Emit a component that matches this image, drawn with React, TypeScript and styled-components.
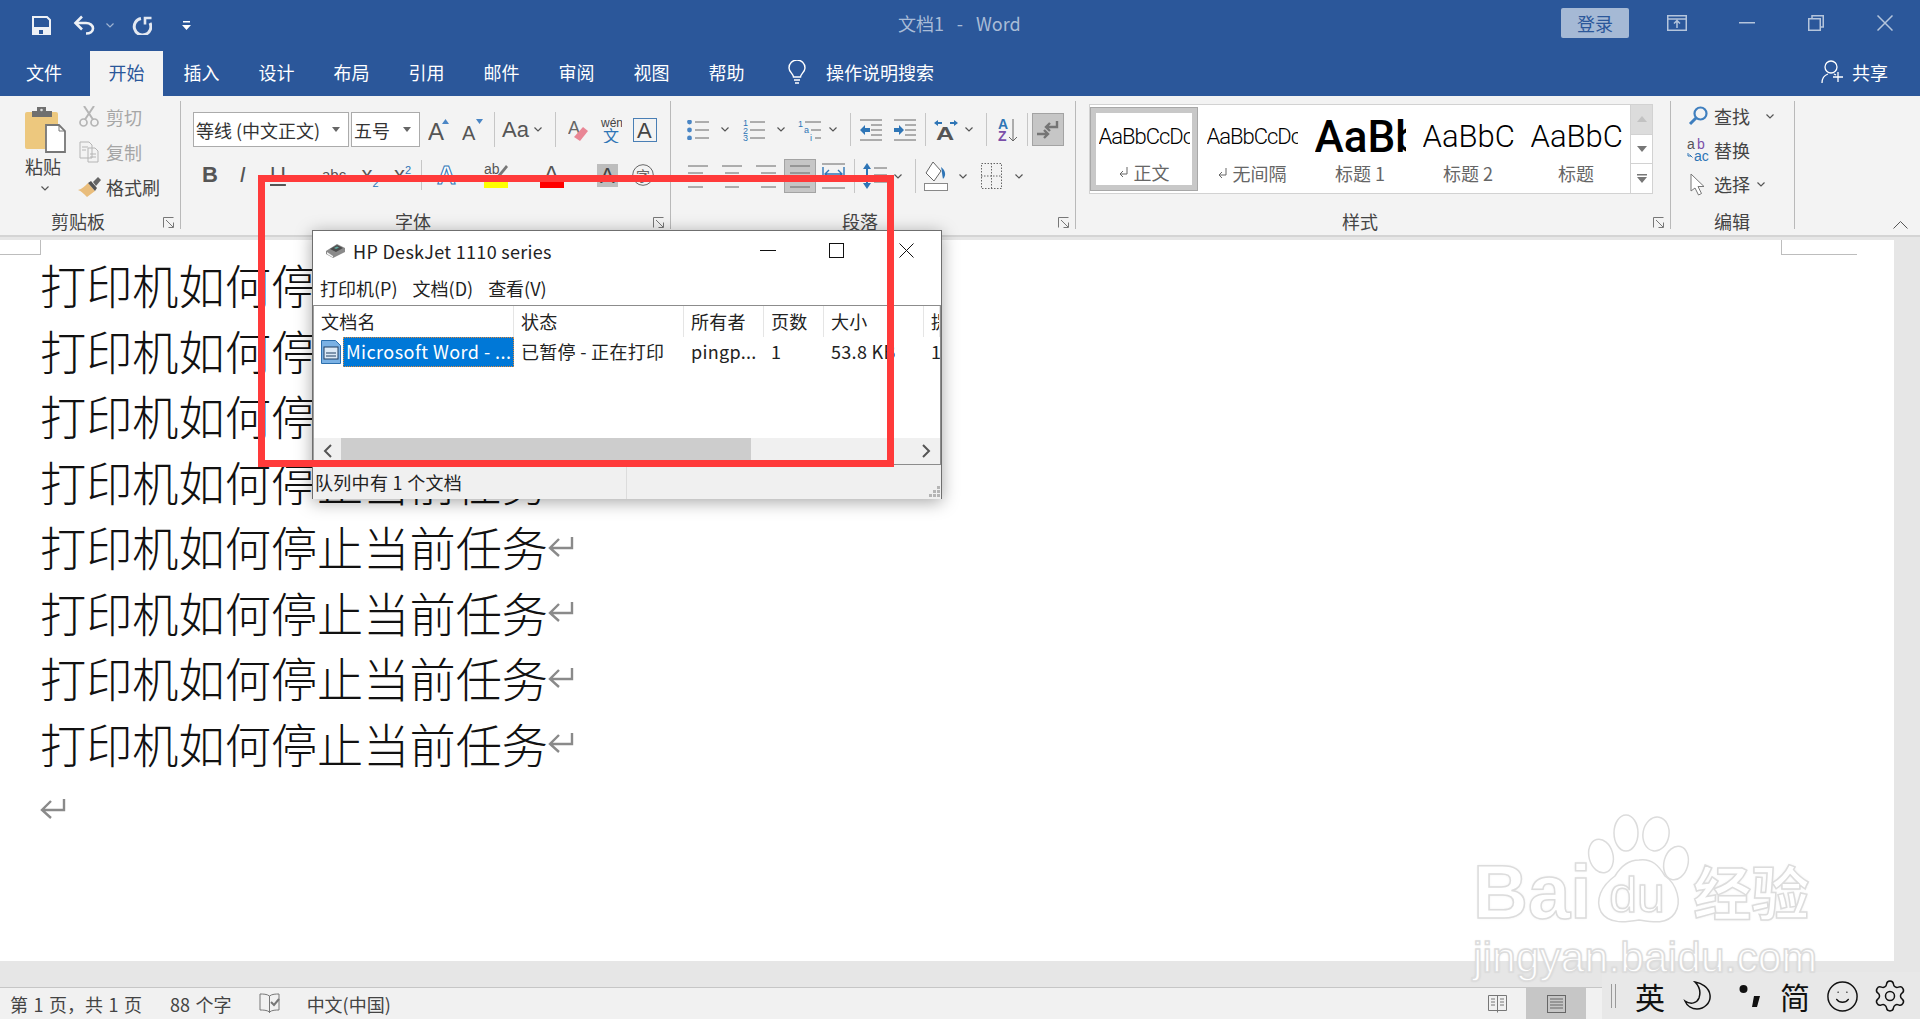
import { FC, ReactNode } from "react";
import styled, { createGlobalStyle } from "styled-components";
import { Settings, Smile } from "lucide-react";

const CJK = `"Noto Sans CJK SC", "Noto Sans", sans-serif`;
const LATIN = `"Liberation Sans", "Noto Sans CJK SC", sans-serif`;

const GlobalStyle = createGlobalStyle`
  html, body { margin: 0; padding: 0; height: 100%; overflow: hidden; background: #fff; }
  #root { width: 1920px; height: 1019px; }
  * { box-sizing: border-box; }
`;

const Shell = styled.div`
  position: relative;
  width: 1920px;
  height: 1019px;
  display: flex;
  flex-direction: column;
  overflow: hidden;
  font-family: ${CJK};
  font-size: 18px;
  color: #444;
`;

/* ---------- title bar ---------- */
const TitleBar = styled.div`
  height: 51px;
  background: #2b579a;
  display: flex;
  align-items: flex-start;
  padding: 15px 0 0 32px;
`;
const Qat = styled.span<{ $w: number; $ml?: number }>`
  display: inline-flex;
  width: ${(p) => p.$w}px;
  margin-left: ${(p) => p.$ml ?? 0}px;
  height: 20px;
  align-items: center;
  justify-content: center;
`;
const DocTitle = styled.div`
  position: absolute;
  left: 898px;
  top: 9px;
  color: #a9bcd7;
  font-size: 18px;
  line-height: 28px;
  white-space: pre;
  word-spacing: 2.4px;
`;
const WindowControls = styled.div`
  margin-left: auto;
  display: flex;
  align-items: center;
  height: 30px;
  margin-top: -7px;
  padding-right: 27px;
`;
const LoginButton = styled.div`
  width: 68px;
  height: 30px;
  background: #a5b9d5;
  color: #2b579a;
  border-radius: 2px;
  text-align: center;
  line-height: 30px;
  font-size: 18px;
`;
const WinIcon = styled.span<{ $ml: number; $w: number }>`
  display: inline-flex;
  margin-left: ${(p) => p.$ml}px;
  width: ${(p) => p.$w}px;
  justify-content: center;
`;

/* ---------- tab row ---------- */
const TabRow = styled.div`
  height: 45px;
  background: #2b579a;
  display: flex;
  padding-left: 8px;
  color: #fff;
`;
const Tab = styled.div<{ $active?: boolean; $w?: number; $mr?: number }>`
  width: ${(p) => p.$w ?? 75}px;
  margin-right: ${(p) => p.$mr ?? 0}px;
  text-align: center;
  line-height: 42px;
  position: relative;
  color: ${(p) => (p.$active ? "#2b579a" : "#fff")};
  z-index: 0;
  &::before {
    content: "";
    display: ${(p) => (p.$active ? "block" : "none")};
    position: absolute;
    inset: 0 1px;
    background: #f3f3f3;
    z-index: -1;
  }
`;
const TellMe = styled.div`
  display: flex;
  align-items: center;
  margin-left: 24px;
  gap: 20px;
  height: 42px;
`;
const ShareBox = styled.div`
  margin-left: auto;
  display: flex;
  align-items: center;
  gap: 8px;
  padding-right: 32px;
  height: 42px;
`;

/* ---------- ribbon ---------- */
const Ribbon = styled.div`
  height: 139px;
  background: #f3f3f3;
  display: flex;
`;
const Group = styled.div<{ $w: number }>`
  width: ${(p) => p.$w}px;
  height: 128px;
  margin-top: 5px;
  border-right: 1px solid #b9b9b9;
  display: flex;
  flex-direction: column;
  flex-shrink: 0;
`;
const GroupBody = styled.div`
  height: 107px;
  flex-shrink: 0;
`;
const GroupLabel = styled.div<{ $left: number }>`
  height: 26px;
  flex-shrink: 0;
  display: flex;
  align-items: center;
  line-height: 26px;
  padding: 0 5px 0 ${(p) => p.$left}px;
  color: #444;
`;
const LauncherSpot = styled.span`
  margin-left: auto;
  display: inline-flex;
  margin-top: 3px;
`;
const Row = styled.div<{ $mt: number; $h: number; $pl?: number }>`
  display: flex;
  align-items: center;
  margin-top: ${(p) => p.$mt}px;
  height: ${(p) => p.$h}px;
  padding-left: ${(p) => p.$pl ?? 0}px;
`;
const Tool = styled.span<{ $w: number; $ml?: number }>`
  display: inline-flex;
  flex-shrink: 0;
  width: ${(p) => p.$w}px;
  margin-left: ${(p) => p.$ml ?? 0}px;
  justify-content: center;
  align-items: center;
`;
const ActiveTool = styled(Tool)<{ $h: number }>`
  height: ${(p) => p.$h}px;
  background: #c6c6c6;
  border: 1px solid #a3a3a3;
`;
const ToolSep = styled.span<{ $ml: number }>`
  width: 1px;
  flex-shrink: 0;
  height: 100%;
  margin-left: ${(p) => p.$ml}px;
  background: #c6c6c6;
`;
const Letter = styled.span<{ $w: number; $ml: number; $size?: number; $bold?: boolean; $italic?: boolean; $under?: boolean }>`
  display: inline-block;
  flex-shrink: 0;
  width: ${(p) => p.$w}px;
  margin-left: ${(p) => p.$ml}px;
  text-align: center;
  white-space: nowrap;
  font-family: ${LATIN};
  font-size: ${(p) => p.$size ?? 22}px;
  font-weight: ${(p) => (p.$bold ? 700 : 400)};
  font-style: ${(p) => (p.$italic ? "italic" : "normal")};
  text-decoration: ${(p) => (p.$under ? "underline" : "none")};
  color: #555;
  line-height: 30px;
  sub, sup {
    font-size: 11px;
    line-height: 0;
    color: #2e75b6;
  }
`;

/* clipboard */
const ClipBody = styled(GroupBody)`
  display: flex;
`;
const PasteCol = styled.div`
  width: 78px;
  padding: 6px 0 0 25px;
  display: flex;
  flex-direction: column;
  align-items: flex-start;
`;
const PasteLabel = styled.div`
  width: 36px;
  line-height: 26px;
  margin-top: -1px;
  text-align: center;
`;
const PasteChevron = styled.div`
  width: 40px;
  display: flex;
  justify-content: center;
  margin-top: 7px;
`;
const ClipCol = styled.div`
  display: flex;
  flex-direction: column;
  margin-top: -2px;
`;
const ClipItem = styled.div<{ $off?: boolean }>`
  height: 35px;
  display: flex;
  align-items: center;
  gap: 6px;
  color: ${(p) => (p.$off ? "#a6a6a6" : "#444")};
`;
const ClipIcon = styled.span`
  display: inline-flex;
  width: 22px;
  justify-content: center;
`;

/* font boxes */
const SelectBox = styled.div<{ $w: number; $ml?: number }>`
  width: ${(p) => p.$w}px;
  margin-left: ${(p) => p.$ml ?? 0}px;
  height: 35px;
  background: #fff;
  border: 1px solid #ababab;
  display: flex;
  align-items: center;
  justify-content: space-between;
  padding: 0 8px 0 2px;
  color: #333;
  white-space: nowrap;
  flex-shrink: 0;
`;

/* styles gallery */
const StylesBody = styled(GroupBody)`
  display: flex;
  padding: 3px 0 0 13px;
`;
const Gallery = styled.div`
  width: 542px;
  height: 90px;
  background: #fff;
  border: 1px solid #d2d2d2;
  display: flex;
  padding: 0;
`;
const StyleItem = styled.div<{ $selected?: boolean }>`
  width: 108px;
  height: ${(p) => (p.$selected ? "84px" : "88px")};
  margin-top: ${(p) => (p.$selected ? "2px" : "0")};
  flex-shrink: 0;
  border: ${(p) => (p.$selected ? "6px solid #c8c8c8" : "6px solid transparent")};
  outline: ${(p) => (p.$selected ? "1px solid #a8a8a8" : "none")};
  outline-offset: -1px;
  display: flex;
  flex-direction: column;
  align-items: center;
  color: #666;
`;
const Preview = styled.div<{ $size: number; $weight?: number; $mt?: number; $track?: number }>`
  width: 91px;
  height: 47px;
  overflow: hidden;
  white-space: nowrap;
  color: #000;
  font-family: Roboto, ${LATIN};
  font-size: ${(p) => p.$size}px;
  font-weight: ${(p) => p.$weight ?? 300};
  letter-spacing: ${(p) => p.$track ?? 0}px;
  line-height: 48px;
  margin-top: ${(p) => p.$mt ?? 0}px;
`;
const StyleName = styled.div`
  line-height: 26px;
  font-size: 18px;
  display: flex;
  align-items: center;
  gap: 5px;
`;
const GalleryScroll = styled.div`
  width: 22px;
  height: 90px;
  display: flex;
  flex-direction: column;
  border: 1px solid #d2d2d2;
  border-left: none;
`;
const ScrollCell = styled.div<{ $top?: boolean }>`
  flex: 1;
  display: flex;
  align-items: center;
  justify-content: center;
  background: ${(p) => (p.$top ? "#dcdcdc" : "#fff")};
  border-bottom: 1px solid #d2d2d2;
  &:last-child { border-bottom: none; }
`;

/* editing */
const EditBody = styled(GroupBody)`
  height: 109px;
  margin-top: -2px;
`;
const EditRow = styled.div`
  height: 34px;
  display: flex;
  align-items: center;
  padding-left: 16px;
`;
const EditIcon = styled.span`
  display: inline-flex;
  width: 22px;
  justify-content: center;
  margin-right: 5px;
`;
const EditChevron = styled.span<{ $ml: number }>`
  display: inline-flex;
  margin-left: ${(p) => p.$ml}px;
`;
const CollapseSpot = styled.div`
  flex: 1;
  display: flex;
  justify-content: flex-end;
  align-items: flex-end;
  padding: 0 12px 6px 0;
`;

/* ---------- document ---------- */
const Workspace = styled.div`
  flex: 1;
  display: flex;
  flex-direction: column;
  background: #e6e6e6;
  border-top: 2px solid #d4d4d4;
  padding-top: 3px;
`;
const DocRow = styled.div`
  flex: 1;
  display: flex;
`;
const Page = styled.div`
  flex: 1;
  position: relative;
  background: #fff;
  padding: 11px 0 0 40px;
  &::before {
    content: "";
    position: absolute;
    left: 0;
    top: 0;
    width: 40px;
    height: 14px;
    border-right: 1px solid #bdbdbd;
    border-bottom: 1px solid #bdbdbd;
  }
  &::after {
    content: "";
    position: absolute;
    left: 1781px;
    top: 0;
    width: 75px;
    height: 14px;
    border-left: 1px solid #bdbdbd;
    border-bottom: 1px solid #bdbdbd;
  }
`;
const Gutter = styled.div`
  width: 26px;
`;
const BottomBand = styled.div`
  height: 26px;
`;
const DocLine = styled.div`
  height: 65.5px;
  display: flex;
  align-items: center;
  font-size: 46.2px;
  line-height: 65.5px;
  color: #111;
  font-weight: 300;
  white-space: nowrap;
`;
const ReturnMark = styled.span`
  display: inline-flex;
`;

/* ---------- status bar ---------- */
const StatusBar = styled.div`
  height: 32px;
  background: #f1f1f1;
  border-top: 1px solid #c6c6c6;
  display: flex;
  align-items: center;
  padding-left: 10px;
  color: #444;
  word-spacing: 1.5px;
`;
const StatusItem = styled.span<{ $ml?: number }>`
  margin-left: ${(p) => p.$ml ?? 0}px;
  display: inline-flex;
  white-space: pre;
`;
const ViewSpacer = styled.span`
  flex: 1;
`;
const ViewButton = styled.span<{ $active?: boolean; $ml?: number }>`
  width: ${(p) => (p.$active ? 60 : 20)}px;
  height: 31px;
  margin-left: ${(p) => p.$ml ?? 0}px;
  background: ${(p) => (p.$active ? "#c6c6c6" : "transparent")};
  display: inline-flex;
  align-items: center;
  justify-content: center;
`;
const ViewTail = styled.span`
  width: 334px;
`;

/* ---------- floating IME bar ---------- */
const ImeBar = styled.div`
  position: absolute;
  right: 0;
  bottom: 0;
  width: 318px;
  height: 47px;
  background: #e8e8e8;
  display: flex;
  align-items: flex-start;
  padding: 9px 0 0 9px;
  color: #111;
`;
const ImeDivider = styled.span`
  width: 5px;
  height: 24px;
  margin-top: 3px;
  border-left: 1px solid #9a9a9a;
  border-right: 1px solid #9a9a9a;
`;
const ImeGlyph = styled.span<{ $ml: number }>`
  margin-left: ${(p) => p.$ml}px;
  width: 30px;
  height: 30px;
  flex-shrink: 0;
  display: inline-flex;
  align-items: center;
  justify-content: center;
  font-size: 30px;
  line-height: 30px;
  color: #111;
  svg { flex-shrink: 0; }
`;

/* ---------- printer queue window ---------- */
const PrintWindow = styled.div`
  position: absolute;
  left: 312px;
  top: 230px;
  width: 630px;
  height: 269px;
  background: #fff;
  border: 1px solid #6f6f6f;
  box-shadow: 0 3px 16px rgba(0, 0, 0, 0.35);
  display: flex;
  flex-direction: column;
  color: #222;
  letter-spacing: 0.3px;
  z-index: 2;
`;
const WindowTitle = styled.div`
  height: 39px;
  display: flex;
  align-items: center;
  padding-left: 12px;
  gap: 7px;
  flex-shrink: 0;
`;
const WindowButtons = styled.div`
  margin-left: auto;
  display: flex;
  align-items: center;
  padding-right: 27px;
`;
const WindowButton = styled.span<{ $ml: number }>`
  display: inline-flex;
  margin-left: ${(p) => p.$ml}px;
`;
const MenuRow = styled.div`
  height: 35px;
  display: flex;
  align-items: center;
  padding-left: 7px;
  gap: 15px;
  flex-shrink: 0;
  letter-spacing: 0;
`;
const ListBox = styled.div`
  height: 160px;
  border: 1px solid #8c8c8c;
  border-left-color: #a0a0a0;
  margin: 0;
  display: flex;
  flex-direction: column;
  flex-shrink: 0;
`;
const Columns = styled.div`
  display: grid;
  grid-template-columns: 200px 170px 80px 60px 100px 1fr;
  overflow: hidden;
`;
const HeadCell = styled.div`
  height: 31px;
  line-height: 31px;
  padding-left: 7px;
  border-right: 1px solid #e5e5e5;
  white-space: nowrap;
  overflow: hidden;
  &:last-child { border-right: none; }
`;
const BodyCell = styled.div`
  height: 30px;
  line-height: 28px;
  padding-left: 7px;
  white-space: nowrap;
  overflow: hidden;
`;
const FirstCell = styled.div`
  height: 30px;
  display: flex;
  align-items: center;
  padding-left: 7px;
`;
const Selected = styled.div`
  margin-left: 2px;
  width: 171px;
  height: 30px;
  line-height: 26px;
  background: #0078d7;
  color: #fff;
  border: 1px dotted #e08a3c;
  padding-left: 2px;
  letter-spacing: 0.45px;
  white-space: nowrap;
  overflow: hidden;
`;
const ListSpacer = styled.div`
  flex: 1;
`;
const HScroll = styled.div`
  height: 26px;
  background: #f0f0f0;
  display: flex;
  align-items: center;
`;
const ScrollArrow = styled.span`
  width: 27px;
  display: inline-flex;
  justify-content: center;
`;
const ScrollTrack = styled.div`
  flex: 1;
  height: 100%;
`;
const ScrollThumb = styled.div`
  width: 410px;
  height: 100%;
  background: #cdcdcd;
`;
const WindowStatus = styled.div`
  flex: 1;
  background: #f0f0f0;
  display: flex;
  align-items: center;
  padding-left: 2px;
  position: relative;
`;
const WindowStatusCell = styled.div`
  width: 312px;
  height: 100%;
  line-height: 34px;
  border-right: 1px solid #dcdcdc;
`;
const Grip = styled.span`
  position: absolute;
  right: 1px;
  bottom: 1px;
  display: inline-flex;
`;

/* ---------- annotation and watermark ---------- */
const RedFrame = styled.div`
  position: absolute;
  left: 258px;
  top: 175px;
  width: 636px;
  height: 292px;
  border: 7px solid #ff3a3a;
  z-index: 3;
`;
const Watermark = styled.div`
  position: absolute;
  left: 1473px;
  top: 810px;
  width: 350px;
  z-index: 1;
`;
const MarkTop = styled.div`
  display: flex;
  height: 122px;
`;
const markText = `
  color: #fff;
  -webkit-text-stroke: 1.5px #dcdcdc;
  text-shadow: 0 0 3px rgba(0, 0, 0, 0.1);
`;
const MarkLogo = styled.span`
  font-family: ${LATIN};
  font-size: 76px;
  font-weight: 700;
  line-height: 76px;
  margin-top: 44px;
  ${markText}
`;
const PawBox = styled.span`
  position: relative;
  width: 110px;
  height: 120px;
  margin-left: -4px;
  flex-shrink: 0;
`;
const PawText = styled.span`
  position: absolute;
  left: 22px;
  top: 60px;
  font-family: ${LATIN};
  font-size: 50px;
  font-weight: 400;
  line-height: 50px;
  ${markText}
`;
const MarkCjk = styled.span`
  font-size: 58px;
  font-weight: 700;
  line-height: 76px;
  margin-top: 42px;
  margin-left: -4px;
  white-space: nowrap;
  ${markText}
`;
const MarkUrl = styled.div`
  font-family: ${LATIN};
  font-size: 42.7px;
  line-height: 50px;
  white-space: nowrap;
  ${markText}
`;

/* ---------- icons ---------- */
const Svg: FC<{ w: number; h: number; children: ReactNode; stroke?: string }> = ({ w, h, children, stroke }) => (
  <svg width={w} height={h} viewBox={`0 0 ${w} ${h}`} fill="none" stroke={stroke} style={{ display: "block", flexShrink: 0 }}>
    {children}
  </svg>
);
const Chevron: FC<{ color?: string }> = ({ color = "#555" }) => (
  <Svg w={8} h={5} stroke={color}><path d="M.5.5 4 4 7.5.5" strokeWidth="1.2" /></Svg>
);
const DropTri = () => <Svg w={8} h={5}><path d="M0 0h8L4 5z" fill="#666" /></Svg>;
const Launcher = () => (
  <Svg w={12} h={11} stroke="#777"><path d="M.5 10.5V.5h10M3 3l7 7M10.5 5.5v5h-5" /></Svg>
);
const SaveIcon = () => (
  <Svg w={19} h={19}>
    <path d="M1 1h14l3 3v14H1z" stroke="#eef1f6" strokeWidth="2" />
    <path d="M1 11h17v7H1z" fill="#eef1f6" />
    <path d="M7 14h4v4H7z" fill="#2b579a" />
  </Svg>
);
const UndoIcon = () => (
  <Svg w={22} h={20} stroke="#eef1f6">
    <path d="M9 1.500 2.500 8 9 14.500" strokeWidth="2.600" />
    <path d="M3 8h10c4 0 7 2.500 7 5.500s-3 5-7 5" strokeWidth="2.600" />
  </Svg>
);
const RedoIcon = () => (
  <Svg w={20} h={20} stroke="#e3e8f1">
    <path d="M9 3.500A8.300 8.300 0 1 0 18 8" strokeWidth="3" />
    <path d="M13 9.500V3h6.500" strokeWidth="2.600" />
  </Svg>
);
const CustomizeIcon = () => (
  <Svg w={9} h={9}><path d="M1 0h7v1.500H1zM0 4h9L4.500 9z" fill="#fff" /></Svg>
);
const BulbIcon = () => (
  <Svg w={18} h={24} stroke="#fff">
    <path d="M5.500 17c0-3-4.500-5-4.500-9a8 8 0 0 1 16 0c0 4-4.500 6-4.500 9z" strokeWidth="1.400" />
    <path d="M6 20h6M7 23h4" strokeWidth="1.600" />
  </Svg>
);
const PersonPlus = () => (
  <Svg w={23} h={24} stroke="#fff">
    <circle cx="10" cy="7" r="6" strokeWidth="1.300" />
    <path d="M1 23c0-5 3-8 6-9M13 14l2 1M17 12v10M12 17h10" strokeWidth="1.300" />
  </Svg>
);
const RibbonDisplay = () => (
  <Svg w={20} h={16} stroke="#b5c5dc">
    <rect x=".75" y=".75" width="18.500" height="14.500" strokeWidth="1.500" />
    <path d="M1 4h18M10 13V6M7 8.500 10 5.500 13 8.500" strokeWidth="1.500" />
  </Svg>
);
const MinIcon = () => <Svg w={16} h={2}><path d="M0 0h16v1.500H0z" fill="#b5c5dc" /></Svg>;
const RestoreIcon = () => (
  <Svg w={16} h={16} stroke="#b5c5dc">
    <rect x=".75" y="3.750" width="11.500" height="11.500" strokeWidth="1.500" />
    <path d="M4 3.500V.75h11.250V12H12.500" strokeWidth="1.500" />
  </Svg>
);
const CloseIcon: FC<{ color?: string; s?: number; sw?: number }> = ({ color = "#b5c5dc", s = 16, sw = 1.5 }) => (
  <Svg w={s} h={s} stroke={color}><path d={`M.5.5l${s - 1} ${s - 1}M${s - 0.5}.5l-${s - 1} ${s - 1}`} strokeWidth={sw} /></Svg>
);
const PasteIcon = () => (
  <Svg w={42} h={47}>
    <rect x="0" y="5" width="33" height="37" rx="2" fill="#edc87e" />
    <path d="M7 4h20v6H7zM12 0h9v5h-9z" fill="#6f6f6f" />
    <circle cx="16.500" cy="3" r="1.300" fill="#ddd" />
    <path d="M21 18h13l6 6v21H21z" fill="#fff" stroke="#777" strokeWidth="1.800" />
    <path d="M34 18v6h6" stroke="#777" />
  </Svg>
);
const ScissorsIcon = () => (
  <Svg w={20} h={21} stroke="#b5b5b5">
    <circle cx="4.500" cy="16.500" r="3.500" strokeWidth="1.700" />
    <circle cx="15.500" cy="16.500" r="3.500" strokeWidth="1.700" />
    <path d="M6 13.500 15 0M14 13.500 5 0" strokeWidth="2" />
  </Svg>
);
const CopyIcon = () => (
  <Svg w={20} h={22} stroke="#b5b5b5">
    <path d="M1 1h9l3 3v13H1zM9 7h7l3 3v11H9z" fill="#f3f3f3" />
    <path d="M3 6h6M3 9h4M11 13h6M11 16h6" />
  </Svg>
);
const BrushIcon = () => (
  <Svg w={23} h={20}>
    <path d="M0 13c4-1 7-4 10-7l7 8-8 6c-3-3-6-6-9-7z" fill="#e9bd7c" />
    <path d="M10 6l3-2 6 7-2 3z" fill="#555" />
    <path d="M15 5l5-5 3 3-5 6z" fill="#666" />
  </Svg>
);
const GrowA: FC<{ up?: boolean }> = ({ up }) => (
  <Svg w={22} h={22}>
    <text x="0" y="21" fontFamily="Liberation Sans" fontSize={up ? 24 : 20} fill="#555">A</text>
    <path d={up ? "M14 5h7l-3.500-5z" : "M14 0h7l-3.500 5z"} fill="#4a86c5" />
  </Svg>
);
const ClearIcon = () => (
  <Svg w={20} h={24}>
    <text x="0" y="16" fontFamily="Liberation Sans" fontSize="18" fill="#666">A</text>
    <path d="M6 19l9-10 5 4-8 10z" fill="#e98695" />
  </Svg>
);
const WenIcon = () => (
  <Svg w={22} h={26}>
    <text x="1" y="10" fontFamily="Liberation Sans" fontSize="12" fill="#444">wén</text>
    <text x="3" y="25" fontFamily="Noto Sans CJK SC" fontSize="16" fill="#2e75b6">文</text>
  </Svg>
);
const BoxA = () => (
  <Svg w={24} h={24}>
    <rect x=".5" y=".5" width="23" height="23" stroke="#4a7fb5" />
    <text x="4" y="20" fontFamily="Liberation Sans" fontSize="22" fill="#444">A</text>
  </Svg>
);
const EffectA = () => (
  <Svg w={23} h={26}><text x="2" y="22" fontFamily="Liberation Sans" fontSize="26" fontWeight="700" fill="#fff" stroke="#2e75b6">A</text></Svg>
);
const Highlight = () => (
  <Svg w={24} h={26}>
    <text x="0" y="12" fontFamily="Liberation Sans" fontSize="14" fill="#555">ab</text>
    <path d="M13 14 22 3l2 2-9 11z" fill="#777" />
    <path d="M0 20h24v6H0z" fill="#ffff00" />
  </Svg>
);
const ColorA = () => (
  <Svg w={24} h={26}>
    <text x="4" y="19" fontFamily="Liberation Sans" fontSize="22" fill="#555">A</text>
    <path d="M0 20h24v6H0z" fill="#ff0000" />
  </Svg>
);
const ShadeA = () => (
  <Svg w={21} h={23}>
    <path d="M0 0h21v23H0z" fill="#bdbdbd" />
    <text x="3" y="19" fontFamily="Liberation Sans" fontSize="22" fill="#444">A</text>
  </Svg>
);
const CircleChar = () => (
  <Svg w={22} h={22}>
    <circle cx="11" cy="11" r="10.300" stroke="#666" />
    <text x="4" y="17" fontFamily="Noto Sans CJK SC" fontSize="14" fill="#666">字</text>
  </Svg>
);
const lines = (ys: number[], x1: number, x2: number) => ys.map((y) => `M${x1} ${y}H${x2}`).join("");
const BulletsIcon = () => (
  <Svg w={22} h={20}>
    <path d={lines([2, 10, 18], 8, 22)} stroke="#666" />
    <circle cx="2.500" cy="2" r="2.400" fill="#4a86c5" /><circle cx="2.500" cy="10" r="2.400" fill="#4a86c5" /><circle cx="2.500" cy="18" r="2.400" fill="#4a86c5" />
  </Svg>
);
const NumberIcon = () => (
  <Svg w={22} h={22}>
    <path d={lines([3, 11, 19], 7, 22)} stroke="#666" />
    <text x="0" y="7" fontFamily="Liberation Sans" fontSize="9" fill="#2e75b6">1</text>
    <text x="0" y="15" fontFamily="Liberation Sans" fontSize="9" fill="#2e75b6">2</text>
    <text x="0" y="22" fontFamily="Liberation Sans" fontSize="9" fill="#2e75b6">3</text>
  </Svg>
);
const MultiIcon = () => (
  <Svg w={23} h={22}>
    <path d={`${lines([3], 7, 23)}${lines([11], 13, 23)}${lines([19], 17, 23)}`} stroke="#666" />
    <text x="0" y="8" fontFamily="Liberation Sans" fontSize="9" fill="#2e75b6">1</text>
    <text x="6" y="14" fontFamily="Liberation Sans" fontSize="9" fill="#2e75b6">a</text>
    <text x="12" y="22" fontFamily="Liberation Sans" fontSize="9" fill="#2e75b6">i</text>
  </Svg>
);
const IndentIcon: FC<{ out?: boolean }> = ({ out }) => (
  <Svg w={22} h={22}>
    <path d={`${lines([1, 21], 0, 22)}${lines([6, 11, 16], 11, 22)}`} stroke="#666" />
    <path d={out ? "M0 11l5-5v3h5v4H5v3z" : "M10 11 5 6v3H0v4h5v3z"} fill="#2e75b6" />
  </Svg>
);
const TextDirIcon = () => (
  <Svg w={24} h={22}>
    <text x="2" y="21" fontFamily="Liberation Sans" fontSize="18" fontWeight="700" fill="#555" transform="scale(1.400 1) translate(-.6 0)">A</text>
    <path d="M0 4l4-3v2h4v2H4v2zM24 4l-4-3v2h-4v2h4v2z" fill="#2e75b6" />
  </Svg>
);
const SortIcon = () => (
  <Svg w={20} h={24}>
    <text x="0" y="11" fontFamily="Liberation Sans" fontSize="14" fontWeight="700" fill="#2e75b6">A</text>
    <text x="0" y="23" fontFamily="Liberation Sans" fontSize="14" fontWeight="700" fill="#7a4fa8">Z</text>
    <path d="M15 1v22M11 19l4 4 4-4" stroke="#666" />
  </Svg>
);
const MarksIcon = () => (
  <Svg w={22} h={20}>
    <path d="M20 1v6H9M13 3 9 7l4 4" stroke="#757575" strokeWidth="2.400" />
    <path d="M0 14h11M7 10l4 4-4 4" stroke="#757575" strokeWidth="2.400" />
  </Svg>
);
const AlignIcon: FC<{ kind: "l" | "c" | "r" | "j" }> = ({ kind }) => {
  const d = kind === "c" ? "M0 1h20M3 8h14M0 15h20M3 22h14" : kind === "r" ? "M0 1h20M5 8h15M0 15h20M5 22h15" : kind === "l" ? "M0 1h20M0 8h15M0 15h20M0 22h15" : "M0 1h20M0 8h20M0 15h20M0 22h20";
  return <Svg w={20} h={23}><path d={d} stroke="#666" /></Svg>;
};
const DistributeIcon = () => (
  <Svg w={23} h={26}>
    <path d="M0 1h23M0 25h23" stroke="#666" />
    <path d="M1 4v14M22 4v14M3 11h17M7 7l-4 4 4 4M16 7l4 4-4 4" stroke="#2e75b6" strokeWidth="1.400" />
  </Svg>
);
const SpacingIcon = () => (
  <Svg w={24} h={28}>
    <path d="M11 6h13M11 13h13M11 20h13" stroke="#666" />
    <path d="M4 1l4 6H5v14h3l-4 6-4-6h3V7H0z" fill="#2e75b6" />
  </Svg>
);
const ShadingIcon = () => (
  <Svg w={24} h={30}>
    <path d="M9 1 2 12l8 8 7-10z" stroke="#666" fill="#fff" />
    <path d="M17 6c4 3 6 8 2 12-1-4-1-8-2-12z" fill="#2e75b6" />
    <rect x=".5" y="22.500" width="23" height="7" fill="#fff" stroke="#888" />
  </Svg>
);
const BordersIcon = () => (
  <Svg w={21} h={26}>
    <rect x=".5" y=".5" width="20" height="25" stroke="#666" strokeDasharray="1.500 1.500" />
    <path d="M10.500 0v26M0 13h21" stroke="#666" strokeDasharray="1.500 1.500" />
  </Svg>
);
const SmallReturn = () => (
  <Svg w={10} h={11} stroke="#666"><path d="M8 0v7H1M4 4 1 7l3 3" /></Svg>
);
const UpTri: FC<{ color?: string }> = ({ color = "#c2c2c2" }) => <Svg w={10} h={6}><path d="M5 0l5 6H0z" fill={color} /></Svg>;
const DownTri = () => <Svg w={10} h={6}><path d="M0 0h10L5 6z" fill="#777" /></Svg>;
const MoreTri = () => <Svg w={10} h={9}><path d="M0 0h10v1.500H0zM0 3h10L5 9z" fill="#777" /></Svg>;
const SearchIcon = () => (
  <Svg w={20} h={20} stroke="#3f7fbf">
    <circle cx="12.500" cy="7.500" r="6" strokeWidth="2.200" />
    <path d="M8 12l-6 6" strokeWidth="3" />
  </Svg>
);
const ReplaceIcon = () => (
  <Svg w={23} h={24}>
    <text x="0" y="11" fontFamily="Liberation Sans" fontSize="14" fill="#555">a</text>
    <text x="10" y="11" fontFamily="Liberation Sans" fontSize="14" fill="#7a4fa8">b</text>
    <path d="M1 15v3h3M2.500 16.500l3 3" stroke="#2e75b6" />
    <text x="7" y="23" fontFamily="Liberation Sans" fontSize="14" fill="#2e75b6">ac</text>
  </Svg>
);
const CursorIcon = () => (
  <Svg w={16} h={23} stroke="#777"><path d="M1 1v17l4-3 3.500 7 3-1.500L8 13.500h6z" fill="#fff" /></Svg>
);
const CollapseUp = () => <Svg w={15} h={8} stroke="#555"><path d="M.5 7.500 7.500.5l7 7" /></Svg>;
const DocReturn = () => (
  <Svg w={26} h={24} stroke="#8a8a8a">
    <path d="M24 3v11H3M11 5 2 14l9 8" strokeWidth="2.400" />
  </Svg>
);
const ProofIcon = () => (
  <Svg w={21} h={21} stroke="#777">
    <path d="M10.500 3C8 1 4 1 1 1v16c3 0 7 0 9.500 2 2.500-2 6.500-2 9.500-2V1c-3 0-7 0-9.500 2zM10.500 3v17" />
    <path d="M12 9l3 3 5-6" strokeWidth="2" />
  </Svg>
);
const ReadIcon = () => (
  <Svg w={19} h={18} stroke="#777">
    <path d="M.5.5h18v15H.5zM9.500.5v17M3 4h4M3 7h4M3 10h4M12 4h4M12 7h4M12 10h4" />
  </Svg>
);
const PrintLayoutIcon = () => (
  <Svg w={19} h={18} stroke="#666">
    <rect x=".5" y=".5" width="18" height="17" />
    <path d="M3 4h13M3 7h13M3 10h13M3 13h13" />
  </Svg>
);
const MoonIcon = () => (
  <Svg w={30} h={30} stroke="#111">
    <path d="M12 1c6 1 14 5 15 13 1 8-6 14-13 14-5 0-10-3-12-8 6 4 12 2 14-3 2-6 0-12-4-16z" strokeWidth="1.500" />
  </Svg>
);
const PunctIcon = () => (
  <Svg w={22} h={24}>
    <circle cx="4.500" cy="5" r="4" fill="#111" />
    <path d="M15 12h6l-3 11h-5z" fill="#111" />
  </Svg>
);
const SmallPrinter = () => (
  <Svg w={21} h={15}>
    <path d="M1 8 12 1l8 4v4L8 15l-7-4z" fill="#8a8a8a" />
    <path d="M5 6l7-4 6 3-7 4z" fill="#4c4c4c" />
    <path d="M9 5l3-1.500 2 1L11 6z" fill="#5fa8a0" />
    <path d="M2 9l6 4v1.500l-6-3.500z" fill="#f2f2f2" />
  </Svg>
);
const QueueDoc = () => (
  <Svg w={20} h={24}>
    <path d="M.5.5h14l5 5v18H.5z" fill="#7ab1e4" stroke="#2c6fad" />
    <rect x="3" y="7" width="14" height="12" fill="#dbe9f6" stroke="#1f3f62" />
    <path d="M5 13h10M5 16h10" stroke="#1f3f62" />
  </Svg>
);
const SmallSquare = () => <Svg w={15} h={15} stroke="#111"><rect x=".5" y=".5" width="14" height="14" /></Svg>;
const SmallMin = () => <Svg w={16} h={1}><path d="M0 .5h16" stroke="#111" /></Svg>;
const ArrowGlyph: FC<{ right?: boolean }> = ({ right }) => (
  <Svg w={9} h={14} stroke="#555">
    <path d={right ? "M1 1l6 6-6 6" : "M8 1 2 7l6 6"} strokeWidth="2" />
  </Svg>
);
const GripIcon = () => (
  <Svg w={12} h={12}>
    <path d="M9 0h3v3H9zM5 4h3v3H5zM9 4h3v3H9zM1 8h3v3H1zM5 8h3v3H5zM9 8h3v3H9z" fill="#b5b5b5" />
  </Svg>
);
const PawIcon = () => (
  <Svg w={110} h={120} stroke="#dcdcdc">
    <g fill="#fff" strokeWidth="1.500">
      <ellipse cx="14" cy="46" rx="12" ry="17" transform="rotate(-15 14 46)" />
      <ellipse cx="39" cy="23" rx="12" ry="18" />
      <ellipse cx="69" cy="24" rx="13" ry="17" transform="rotate(10 69 24)" />
      <ellipse cx="89" cy="53" rx="12" ry="17" transform="rotate(15 89 53)" />
      <path d="M52 50c13-2 20 6 26 16 12 8 17 26 10 37-8 12-23 9-36 7-12 2-30 5-38-8-6-12 0-26 14-36 6-10 14-16 24-16z" />
    </g>
  </Svg>
);

const TABS = ["插入", "设计", "布局", "引用", "邮件", "审阅", "视图", "帮助"];
const DOC_LINES = Array.from({ length: 8 }, (_, i) => i);

export default function App() {
  return (
    <Shell>
      <GlobalStyle />

      <TitleBar>
        <Qat $w={19}><SaveIcon /></Qat>
        <Qat $w={22} $ml={22}><UndoIcon /></Qat>
        <Qat $w={8} $ml={11}><Chevron color="#9fb4d2" /></Qat>
        <Qat $w={20} $ml={18}><RedoIcon /></Qat>
        <Qat $w={9} $ml={30}><CustomizeIcon /></Qat>
        <DocTitle>文档1  -  Word</DocTitle>
        <WindowControls>
          <LoginButton>登录</LoginButton>
          <WinIcon $ml={38} $w={20}><RibbonDisplay /></WinIcon>
          <WinIcon $ml={52} $w={16}><MinIcon /></WinIcon>
          <WinIcon $ml={53} $w={16}><RestoreIcon /></WinIcon>
          <WinIcon $ml={53} $w={16}><CloseIcon /></WinIcon>
        </WindowControls>
      </TitleBar>

      <TabRow>
        <Tab $w={72} $mr={9}>文件</Tab>
        <Tab $active>开始</Tab>
        {TABS.map((t) => <Tab key={t}>{t}</Tab>)}
        <TellMe><BulbIcon /><span>操作说明搜索</span></TellMe>
        <ShareBox><PersonPlus /><span>共享</span></ShareBox>
      </TabRow>

      <Ribbon>
        <Group $w={181}>
          <ClipBody>
            <PasteCol>
              <PasteIcon />
              <PasteLabel>粘贴</PasteLabel>
              <PasteChevron><Chevron /></PasteChevron>
            </PasteCol>
            <ClipCol>
              <ClipItem $off><ClipIcon><ScissorsIcon /></ClipIcon>剪切</ClipItem>
              <ClipItem $off><ClipIcon><CopyIcon /></ClipIcon>复制</ClipItem>
              <ClipItem><ClipIcon><BrushIcon /></ClipIcon>格式刷</ClipItem>
            </ClipCol>
          </ClipBody>
          <GroupLabel $left={51}>
            <span>剪贴板</span>
            <LauncherSpot><Launcher /></LauncherSpot>
          </GroupLabel>
        </Group>

        <Group $w={490}>
          <GroupBody>
            <Row $mt={11} $h={35} $pl={12}>
              <SelectBox $w={156}>等线 (中文正文)<DropTri /></SelectBox>
              <SelectBox $w={69} $ml={2}>五号<DropTri /></SelectBox>
              <Tool $w={22} $ml={8}><GrowA up /></Tool>
              <Tool $w={22} $ml={12}><GrowA /></Tool>
              <ToolSep $ml={10} />
              <Letter $w={24} $ml={7} $size={22}>Aa</Letter>
              <Tool $w={8} $ml={8}><Chevron /></Tool>
              <ToolSep $ml={13} />
              <Tool $w={20} $ml={12}><ClearIcon /></Tool>
              <Tool $w={22} $ml={12}><WenIcon /></Tool>
              <Tool $w={24} $ml={11}><BoxA /></Tool>
            </Row>
            <Row $mt={13} $h={30} $pl={12}>
              <Letter $w={14} $ml={9} $bold>B</Letter>
              <Letter $w={13} $ml={20} $italic>I</Letter>
              <Letter $w={13} $ml={21} $under>U</Letter>
              <Letter $w={23} $ml={39} $size={15}>abc</Letter>
              <Letter $w={20} $ml={15}>x<sub>2</sub></Letter>
              <Letter $w={19} $ml={13}>x<sup>2</sup></Letter>
              <ToolSep $ml={9} />
              <Tool $w={23} $ml={13}><EffectA /></Tool>
              <Tool $w={24} $ml={26}><Highlight /></Tool>
              <Tool $w={24} $ml={32}><ColorA /></Tool>
              <Tool $w={21} $ml={33}><ShadeA /></Tool>
              <Tool $w={22} $ml={14}><CircleChar /></Tool>
            </Row>
          </GroupBody>
          <GroupLabel $left={214}>
            <span>字体</span>
            <LauncherSpot><Launcher /></LauncherSpot>
          </GroupLabel>
        </Group>

        <Group $w={405}>
          <GroupBody>
            <Row $mt={12} $h={33}>
              <Tool $w={22} $ml={16}><BulletsIcon /></Tool>
              <Tool $w={8} $ml={12}><Chevron /></Tool>
              <Tool $w={22} $ml={14}><NumberIcon /></Tool>
              <Tool $w={8} $ml={12}><Chevron /></Tool>
              <Tool $w={23} $ml={13}><MultiIcon /></Tool>
              <Tool $w={8} $ml={8}><Chevron /></Tool>
              <ToolSep $ml={13} />
              <Tool $w={22} $ml={9}><IndentIcon out /></Tool>
              <Tool $w={22} $ml={12}><IndentIcon /></Tool>
              <ToolSep $ml={9} />
              <Tool $w={24} $ml={8}><TextDirIcon /></Tool>
              <Tool $w={8} $ml={7}><Chevron /></Tool>
              <ToolSep $ml={13} />
              <Tool $w={20} $ml={11}><SortIcon /></Tool>
              <ToolSep $ml={9} />
              <ActiveTool $w={32} $ml={4} $h={33}><MarksIcon /></ActiveTool>
            </Row>
            <Row $mt={13} $h={34}>
              <Tool $w={20} $ml={17}><AlignIcon kind="l" /></Tool>
              <Tool $w={22} $ml={13}><AlignIcon kind="c" /></Tool>
              <Tool $w={21} $ml={12}><AlignIcon kind="r" /></Tool>
              <ActiveTool $w={32} $ml={8} $h={34}><AlignIcon kind="j" /></ActiveTool>
              <Tool $w={23} $ml={6}><DistributeIcon /></Tool>
              <ToolSep $ml={9} />
              <Tool $w={24} $ml={8}><SpacingIcon /></Tool>
              <Tool $w={8} $ml={7}><Chevron /></Tool>
              <ToolSep $ml={13} />
              <Tool $w={24} $ml={8}><ShadingIcon /></Tool>
              <Tool $w={8} $ml={11}><Chevron /></Tool>
              <Tool $w={21} $ml={14}><BordersIcon /></Tool>
              <Tool $w={8} $ml={13}><Chevron /></Tool>
            </Row>
          </GroupBody>
          <GroupLabel $left={171}>
            <span>段落</span>
            <LauncherSpot><Launcher /></LauncherSpot>
          </GroupLabel>
        </Group>

        <Group $w={595}>
          <StylesBody>
            <Gallery>
              <StyleItem $selected>
                <Preview $size={22} $track={-1}>AaBbCcDc</Preview>
                <StyleName><SmallReturn />正文</StyleName>
              </StyleItem>
              <StyleItem>
                <Preview $size={22} $track={-1} $mt={2}>AaBbCcDc</Preview>
                <StyleName><SmallReturn />无间隔</StyleName>
              </StyleItem>
              <StyleItem>
                <Preview $size={44} $weight={500} $mt={2}>AaBbC</Preview>
                <StyleName>标题 1</StyleName>
              </StyleItem>
              <StyleItem>
                <Preview $size={31} $mt={2}>AaBbC</Preview>
                <StyleName>标题 2</StyleName>
              </StyleItem>
              <StyleItem>
                <Preview $size={31} $mt={2}>AaBbC</Preview>
                <StyleName>标题</StyleName>
              </StyleItem>
            </Gallery>
            <GalleryScroll>
              <ScrollCell $top><UpTri /></ScrollCell>
              <ScrollCell><DownTri /></ScrollCell>
              <ScrollCell><MoreTri /></ScrollCell>
            </GalleryScroll>
          </StylesBody>
          <GroupLabel $left={266}>
            <span>样式</span>
            <LauncherSpot><Launcher /></LauncherSpot>
          </GroupLabel>
        </Group>

        <Group $w={124}>
          <EditBody>
            <EditRow><EditIcon><SearchIcon /></EditIcon>查找<EditChevron $ml={16}><Chevron /></EditChevron></EditRow>
            <EditRow><EditIcon><ReplaceIcon /></EditIcon>替换</EditRow>
            <EditRow><EditIcon><CursorIcon /></EditIcon>选择<EditChevron $ml={7}><Chevron /></EditChevron></EditRow>
          </EditBody>
          <GroupLabel $left={43}>
            <span>编辑</span>
          </GroupLabel>
        </Group>
        <CollapseSpot><CollapseUp /></CollapseSpot>
      </Ribbon>

      <Workspace>
        <DocRow>
          <Page>
            {DOC_LINES.map((i) => (
              <DocLine key={i}>
                打印机如何停止当前任务
                <ReturnMark><DocReturn /></ReturnMark>
              </DocLine>
            ))}
            <DocLine><DocReturn /></DocLine>
          </Page>
          <Gutter />
        </DocRow>
        <BottomBand />
      </Workspace>

      <StatusBar>
        <StatusItem>第 1 页，共 1 页</StatusItem>
        <StatusItem $ml={28}>88 个字</StatusItem>
        <StatusItem $ml={27}><ProofIcon /></StatusItem>
        <StatusItem $ml={27}>中文(中国)</StatusItem>
        <ViewSpacer />
        <ViewButton><ReadIcon /></ViewButton>
        <ViewButton $active $ml={19}><PrintLayoutIcon /></ViewButton>
        <ViewTail />
      </StatusBar>

      <Watermark>
        <MarkTop>
          <MarkLogo>Bai</MarkLogo>
          <PawBox>
            <PawIcon />
            <PawText>du</PawText>
          </PawBox>
          <MarkCjk>经验</MarkCjk>
        </MarkTop>
        <MarkUrl>jingyan.baidu.com</MarkUrl>
      </Watermark>

      <ImeBar>
        <ImeDivider />
        <ImeGlyph $ml={19}>英</ImeGlyph>
        <ImeGlyph $ml={18}><MoonIcon /></ImeGlyph>
        <ImeGlyph $ml={22}><PunctIcon /></ImeGlyph>
        <ImeGlyph $ml={15}>简</ImeGlyph>
        <ImeGlyph $ml={17}><Smile size={35} strokeWidth={1} color="#111" /></ImeGlyph>
        <ImeGlyph $ml={18}><Settings size={36} strokeWidth={1} color="#111" /></ImeGlyph>
      </ImeBar>

      <PrintWindow>
        <WindowTitle>
          <SmallPrinter />
          <span>HP DeskJet 1110 series</span>
          <WindowButtons>
            <WindowButton $ml={0}><SmallMin /></WindowButton>
            <WindowButton $ml={53}><SmallSquare /></WindowButton>
            <WindowButton $ml={55}><CloseIcon color="#111" s={15} sw={1} /></WindowButton>
          </WindowButtons>
        </WindowTitle>
        <MenuRow>
          <span>打印机(P)</span>
          <span>文档(D)</span>
          <span>查看(V)</span>
        </MenuRow>
        <ListBox>
          <Columns>
            <HeadCell>文档名</HeadCell>
            <HeadCell>状态</HeadCell>
            <HeadCell>所有者</HeadCell>
            <HeadCell>页数</HeadCell>
            <HeadCell>大小</HeadCell>
            <HeadCell>提交时间</HeadCell>
            <FirstCell><QueueDoc /><Selected>Microsoft Word - ...</Selected></FirstCell>
            <BodyCell>已暂停 - 正在打印</BodyCell>
            <BodyCell>pingp...</BodyCell>
            <BodyCell>1</BodyCell>
            <BodyCell>53.8 KB</BodyCell>
            <BodyCell>1</BodyCell>
          </Columns>
          <ListSpacer />
          <HScroll>
            <ScrollArrow><ArrowGlyph /></ScrollArrow>
            <ScrollTrack><ScrollThumb /></ScrollTrack>
            <ScrollArrow><ArrowGlyph right /></ScrollArrow>
          </HScroll>
        </ListBox>
        <WindowStatus>
          <WindowStatusCell>队列中有 1 个文档</WindowStatusCell>
          <Grip><GripIcon /></Grip>
        </WindowStatus>
      </PrintWindow>

      <RedFrame />
    </Shell>
  );
}
